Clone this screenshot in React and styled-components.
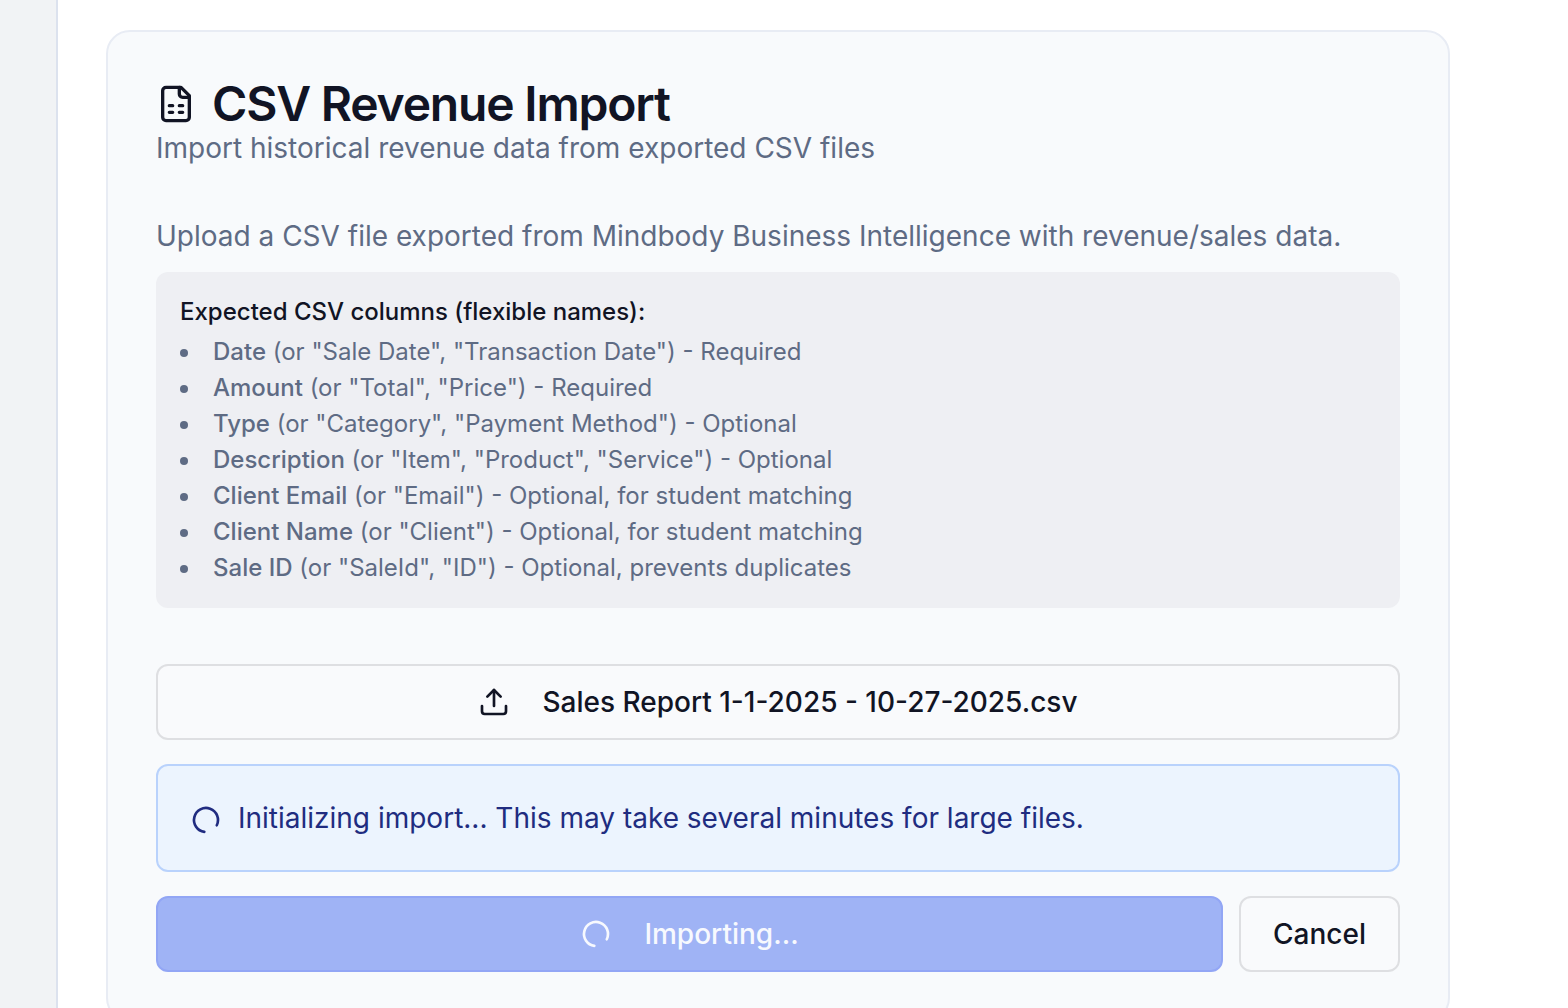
import React from "react";
import styled, { createGlobalStyle } from "styled-components";
import { Upload } from "lucide-react";

const Global = createGlobalStyle`
  *, *::before, *::after { box-sizing: border-box; }
  body { margin: 0; background: #fff; font-family: Inter, "Liberation Sans", sans-serif; color: #111424; }
  h1, p, ul { margin: 0; }
  button { font-family: inherit; }
`;
const Shell = styled.div`
  display: flex;
  height: 100vh;
  overflow: hidden;
`;
const Sidebar = styled.aside`
  flex: 0 0 58px;
  background: #f1f3f5;
  border-right: 2px solid #dce2ee;
`;
const Main = styled.main`
  flex: 1;
  padding: 30px 118px 0 48px;
`;
const Card = styled.section`
  padding: 48px;
  background: #f8fafc;
  border: 2px solid #e8ecf4;
  border-radius: 24px;
`;
const Title = styled.h1`
  display: flex;
  align-items: center;
  gap: 16px;
  font-size: 48px;
  line-height: 48px;
  font-weight: 600;
  letter-spacing: -0.025em;
`;
const Subtitle = styled.p`
  font-size: 28px;
  line-height: 40px;
  color: #5e6b84;
`;
const Intro = styled(Subtitle)`
  margin: 48px 0 16px;
`;
const Columns = styled.div`
  padding: 24px;
  margin-bottom: 56px;
  border-radius: 12px;
  background: #eeeff3;
  font-size: 24px;
`;
const ColumnsTitle = styled.p`
  line-height: 32px;
  font-weight: 500;
  margin-bottom: 8px;
`;
const List = styled.ul`
  padding: 0;
  list-style: disc inside;
  line-height: 32px;
  color: #5e6b84;
`;
const Item = styled.li`
  & + & { margin-top: 4px; }
`;
const Name = styled.strong`
  font-weight: 500;
`;
const Button = styled.button`
  display: flex;
  align-items: center;
  justify-content: center;
  gap: 32px;
  height: 76px;
  padding: 0 32px;
  flex: ${(p) => (p.$grow ? "1" : "none")};
  width: ${(p) => (p.$full ? "100%" : "auto")};
  border: 2px solid ${(p) => (p.$primary ? "#92a6f5" : "#dedfe2")};
  border-radius: 12px;
  background: ${(p) => (p.$primary ? "#9fb3f5" : "#f9fafc")};
  color: ${(p) => (p.$primary ? "#f7f9fe" : "#111424")};
  font-size: 28px;
  line-height: 40px;
  font-weight: 500;
`;
const Status = styled.div`
  display: flex;
  align-items: center;
  gap: 16px;
  margin: 24px 0;
  padding: 32px;
  border: 2px solid #b9d2fc;
  border-radius: 12px;
  background: #ecf4fe;
  color: #202c80;
  font-size: 28px;
  line-height: 40px;
`;
const StatusIcon = styled.span`
  display: flex;
  padding-top: 4px;
`;
const Actions = styled.div`
  display: flex;
  gap: 16px;
`;

const Svg = (p) => (
  <svg viewBox="0 0 24 24" fill="none" stroke="currentColor" strokeWidth="2" strokeLinecap="round" strokeLinejoin="round" aria-hidden="true" {...p} />
);
const SheetIcon = () => (
  <Svg width="40" height="40">
    <path d="M15 2H6a2 2 0 0 0-2 2v16a2 2 0 0 0 2 2h12a2 2 0 0 0 2-2V7Z" />
    <path d="M14 2v4a2 2 0 0 0 2 2h4" />
    <path d="M8 13h2M14 13h2M8 17h2M14 17h2" />
  </Svg>
);
const Spinner = () => (
  <Svg width="32" height="32">
    <path d="M21 12a9 9 0 1 1-6.219-8.56" transform="rotate(98 12 12)" />
  </Svg>
);

const columns = [
  ["Date", '(or "Sale Date", "Transaction Date") - Required'],
  ["Amount", '(or "Total", "Price") - Required'],
  ["Type", '(or "Category", "Payment Method") - Optional'],
  ["Description", '(or "Item", "Product", "Service") - Optional'],
  ["Client Email", '(or "Email") - Optional, for student matching'],
  ["Client Name", '(or "Client") - Optional, for student matching'],
  ["Sale ID", '(or "SaleId", "ID") - Optional, prevents duplicates'],
];

export default function App() {
  return (
    <Shell>
      <Global />
      <Sidebar />
      <Main>
        <Card>
          <Title><SheetIcon />CSV Revenue Import</Title>
          <Subtitle>Import historical revenue data from exported CSV files</Subtitle>
          <Intro>Upload a CSV file exported from Mindbody Business Intelligence with revenue/sales data.</Intro>
          <Columns>
            <ColumnsTitle>Expected CSV columns (flexible names):</ColumnsTitle>
            <List>
              {columns.map(([name, rest]) => (
                <Item key={name}><Name>{name}</Name> {rest}</Item>
              ))}
            </List>
          </Columns>
          <Button type="button" $full><Upload size={32} />Sales Report 1-1-2025 - 10-27-2025.csv</Button>
          <Status role="status">
            <StatusIcon><Spinner /></StatusIcon>
            Initializing import... This may take several minutes for large files.
          </Status>
          <Actions>
            <Button type="button" $primary $grow disabled><Spinner />Importing...</Button>
            <Button type="button">Cancel</Button>
          </Actions>
        </Card>
      </Main>
    </Shell>
  );
}
